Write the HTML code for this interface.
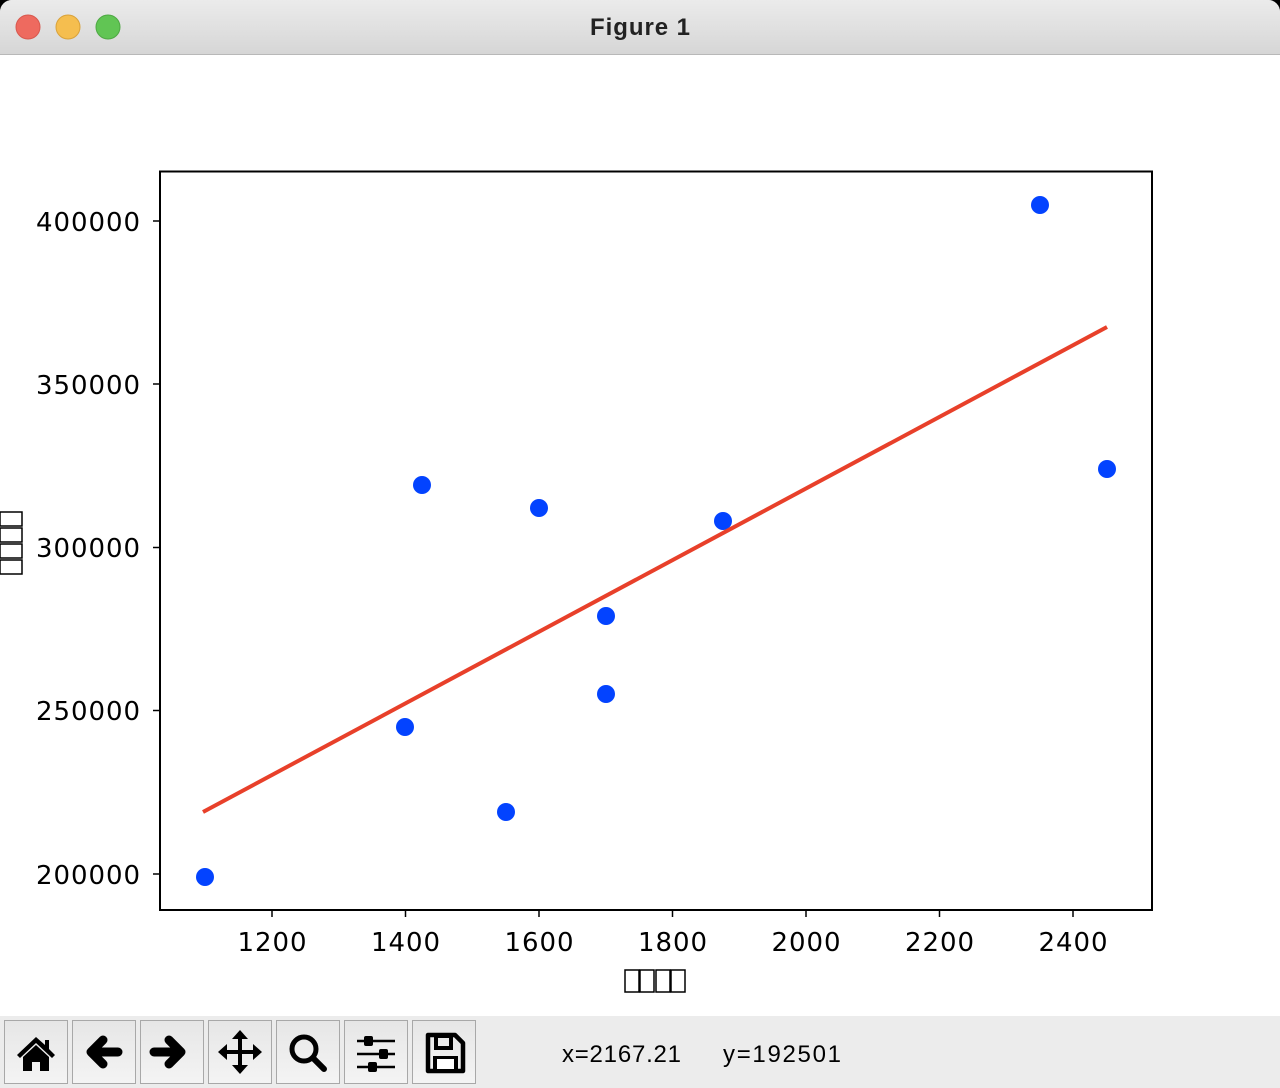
<!DOCTYPE html>
<html><head><meta charset="utf-8"><style>
html,body{margin:0;padding:0;width:1280px;height:1088px;overflow:hidden;background:#000;font-family:"Liberation Sans","DejaVu Sans",sans-serif}
</style></head><body>
<svg width="1280" height="1088" xmlns="http://www.w3.org/2000/svg" font-family="DejaVu Sans, Liberation Sans, sans-serif">
<defs><linearGradient id="tb" x1="0" y1="0" x2="0" y2="1"><stop offset="0" stop-color="#ebebeb"/><stop offset="1" stop-color="#d6d6d6"/></linearGradient>
<linearGradient id="bt" x1="0" y1="0" x2="0" y2="1"><stop offset="0" stop-color="#e6e6e6"/><stop offset="1" stop-color="#f4f4f4"/></linearGradient></defs>
<rect x="0" y="0" width="1280" height="1088" rx="12" fill="#fff"/>
<path d="M0 12 A12 12 0 0 1 12 0 H1268 A12 12 0 0 1 1280 12 V54 H0Z" fill="url(#tb)"/>
<line x1="0" y1="54.5" x2="1280" y2="54.5" stroke="#b8b8b8"/>
<circle cx="28" cy="27" r="12" fill="#ee6a5f" stroke="#d8584e"/>
<circle cx="68" cy="27" r="12" fill="#f5be4f" stroke="#d9a23a"/>
<circle cx="108" cy="27" r="12" fill="#61c554" stroke="#4ea843"/>
<text x="640" y="35" text-anchor="middle" font-family="Liberation Sans, sans-serif" font-weight="bold" font-size="24" fill="#222" textLength="100">Figure 1</text>
<rect x="160" y="171.5" width="992" height="738.5" fill="none" stroke="#000" stroke-width="2"/>
<g stroke="#000" stroke-width="1.5">
<line x1="272" y1="910" x2="272" y2="917"/><line x1="405.5" y1="910" x2="405.5" y2="917"/><line x1="539" y1="910" x2="539" y2="917"/><line x1="672.5" y1="910" x2="672.5" y2="917"/><line x1="806" y1="910" x2="806" y2="917"/><line x1="939.5" y1="910" x2="939.5" y2="917"/><line x1="1073" y1="910" x2="1073" y2="917"/>
<line x1="153" y1="221" x2="160" y2="221"/><line x1="153" y1="384" x2="160" y2="384"/><line x1="153" y1="547.5" x2="160" y2="547.5"/><line x1="153" y1="710.5" x2="160" y2="710.5"/><line x1="153" y1="874" x2="160" y2="874"/>
</g>
<g font-size="26" fill="#000" text-anchor="middle">
<text x="272" y="951" textLength="69">1200</text><text x="405.5" y="951" textLength="69">1400</text><text x="539" y="951" textLength="69">1600</text><text x="672.5" y="951" textLength="69">1800</text><text x="806" y="951" textLength="69">2000</text><text x="939.5" y="951" textLength="69">2200</text><text x="1073" y="951" textLength="69">2400</text>
</g>
<g font-size="26" fill="#000">
<text x="36" y="231" textLength="104">400000</text><text x="36" y="394" textLength="104">350000</text><text x="36" y="557" textLength="104">300000</text><text x="36" y="720" textLength="104">250000</text><text x="36" y="884" textLength="104">200000</text>
</g>
<g fill="none" stroke="#000" stroke-width="1.5">
<rect x="625" y="970" width="14" height="22"/><rect x="640" y="970" width="14" height="22"/><rect x="656" y="970" width="14" height="22"/><rect x="671" y="970" width="14" height="22"/>
<rect x="0" y="512" width="22" height="14"/><rect x="0" y="528" width="22" height="14"/><rect x="0" y="544" width="22" height="14"/><rect x="0" y="560" width="22" height="14"/>
</g>
<g fill="#0343ff">
<circle cx="205" cy="877" r="9"/><circle cx="405" cy="727" r="9"/><circle cx="422" cy="485" r="9"/><circle cx="506" cy="812" r="9"/><circle cx="539" cy="508" r="9"/><circle cx="606" cy="616" r="9"/><circle cx="606" cy="694" r="9"/><circle cx="723" cy="521" r="9"/><circle cx="1040" cy="205" r="9"/><circle cx="1107" cy="469" r="9"/>
</g>
<line x1="203" y1="812" x2="1107" y2="327" stroke="#e8402a" stroke-width="4"/>
<rect x="0" y="1016" width="1280" height="72" fill="#ececec"/>
<g stroke="#a8a8a8" stroke-width="1" fill="url(#bt)">
<rect x="4.5" y="1020.5" width="63" height="63"/><rect x="72.5" y="1020.5" width="63" height="63"/><rect x="140.5" y="1020.5" width="63" height="63"/><rect x="208.5" y="1020.5" width="63" height="63"/><rect x="276.5" y="1020.5" width="63" height="63"/><rect x="344.5" y="1020.5" width="63" height="63"/><rect x="412.5" y="1020.5" width="63" height="63"/>
</g>
<path d="M36 1037 L17 1055 L20 1058 L36 1043 L52 1058 L55 1055 L49 1049 V1040 H45 V1045 Z" fill="#000"/>
<path d="M23 1057 L36 1045 L49 1057 V1071 H40 V1062 H32 V1071 H23Z" fill="#000"/>
<path d="M118 1052 H92 M103 1040 L91 1052 L103 1064" stroke="#000" stroke-width="9" stroke-linecap="round" stroke-linejoin="round" fill="none"/>
<path d="M154 1052 H180 M169 1040 L181 1052 L169 1064" stroke="#000" stroke-width="9" stroke-linecap="round" stroke-linejoin="round" fill="none"/>
<path d="M240 1034 V1070 M222 1052 H258" stroke="#000" stroke-width="4"/>
<path d="M240 1030 L232 1039 H248Z M240 1074 L232 1065 H248Z M218 1052 L227 1044 V1060Z M262 1052 L253 1044 V1060Z" fill="#000"/>
<circle cx="304" cy="1049" r="12" stroke="#000" stroke-width="5" fill="none"/>
<path d="M313 1058 L324 1069" stroke="#000" stroke-width="6" stroke-linecap="round"/>
<g stroke="#000" stroke-width="2.5"><line x1="357" y1="1041" x2="395" y2="1041"/><line x1="357" y1="1054" x2="395" y2="1054"/><line x1="357" y1="1067" x2="395" y2="1067"/></g>
<g fill="#000"><rect x="364" y="1036" width="9" height="10" rx="2"/><rect x="379" y="1049" width="9" height="10" rx="2"/><rect x="368" y="1062" width="9" height="10" rx="2"/></g>
<path d="M428 1035 H455 L463 1043 V1071 H428Z" fill="none" stroke="#000" stroke-width="4.5" stroke-linejoin="round"/>
<rect x="436" y="1036" width="15" height="12" fill="none" stroke="#000" stroke-width="4"/>
<rect x="433" y="1056" width="25" height="13" fill="#000"/>
<rect x="437" y="1059" width="17" height="10" fill="#fff"/>
<text x="562" y="1062" font-family="Liberation Sans, sans-serif" font-size="24" fill="#000" textLength="119">x=2167.21</text>
<text x="723" y="1062" font-family="Liberation Sans, sans-serif" font-size="24" fill="#000" textLength="118">y=192501</text>
</svg>
</body></html>
